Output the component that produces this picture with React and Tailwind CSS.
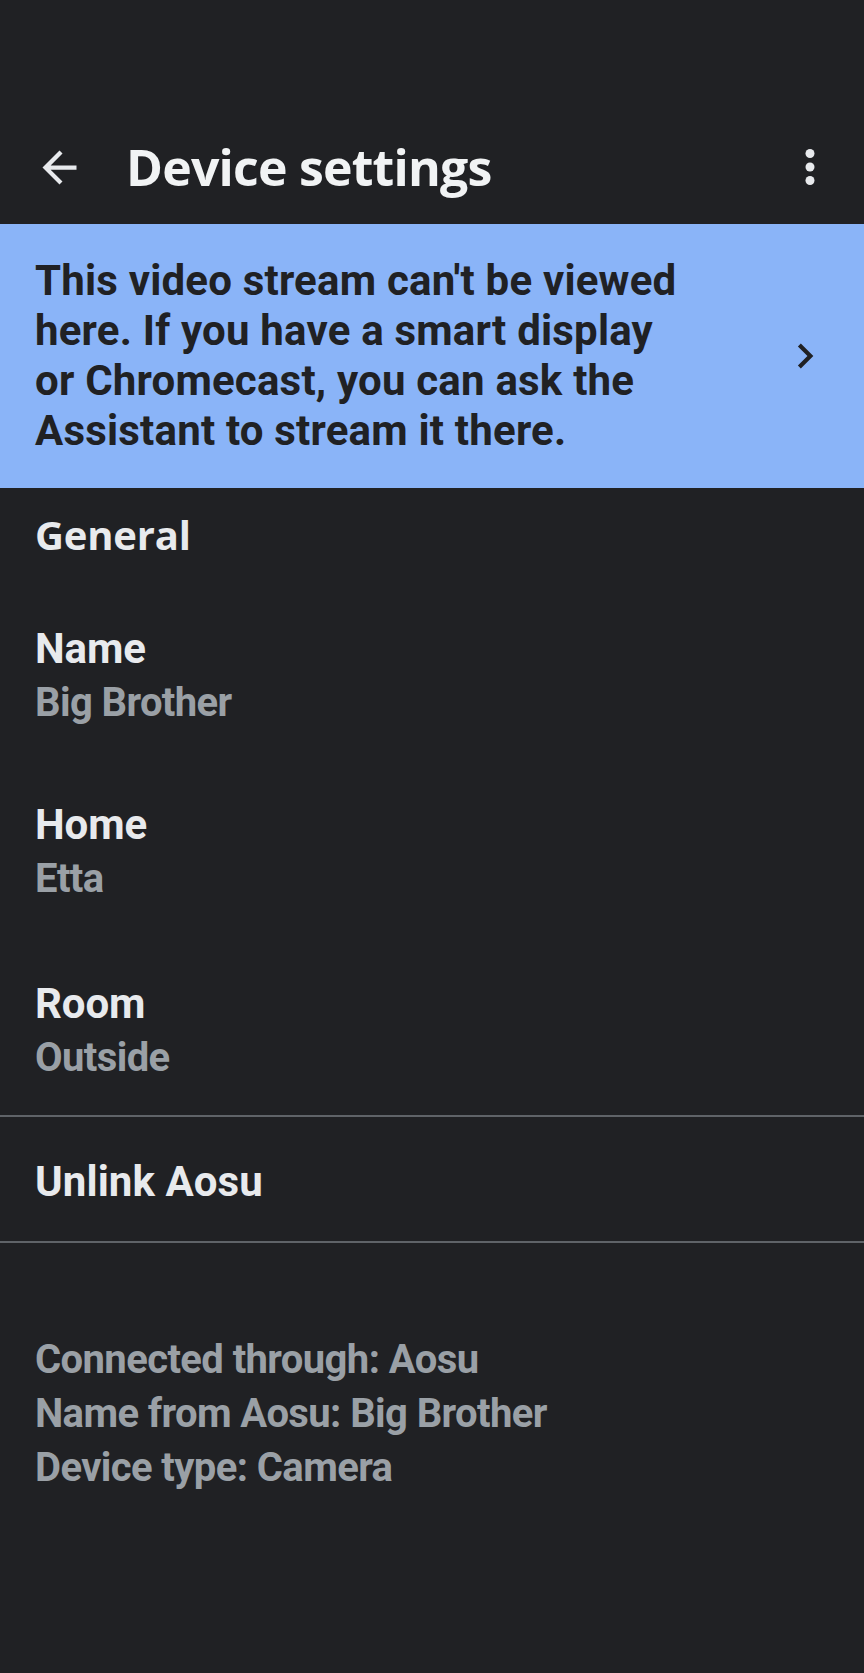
import React from 'react';

function Row({ label, value, className }) {
  return (
    <div className={`px-[35px] ${className}`}>
      <div className="text-[42px] leading-[54px] font-bold tracking-[-0.1px] text-[#e8eaed]">{label}</div>
      <div className="text-[40px] leading-[54px] font-bold tracking-[-0.6px] text-[#9aa0a6]">{value}</div>
    </div>
  );
}

export default function App() {
  return (
    <div className="min-h-[1673px] w-full bg-[#202124] font-['Roboto','Liberation_Sans',sans-serif]">
      {/* status bar space */}
      <div className="h-[110px]" />

      {/* header */}
      <header className="h-[114px] flex items-center">
        <button className="ml-[34px] w-[51px] h-[51px] flex items-center justify-center">
          <svg viewBox="0 0 24 24" className="w-[51px] h-[51px]" fill="#e8eaed">
            <path d="M20 11H7.83l5.59-5.59L12 4l-8 8 8 8 1.41-1.41L7.83 13H20v-2z" />
          </svg>
        </button>
        <h1 className="ml-[41px] flex-1 text-[50px] leading-none font-bold text-[#f1f3f4] font-['Open_Sans',sans-serif] tracking-[-0.8px]">
          Device settings
        </h1>
        <button className="mr-[27px] w-[54px] h-[54px] flex items-center justify-center">
          <svg viewBox="0 0 24 24" className="w-[54px] h-[54px]" fill="#e8eaed">
            <circle cx="12" cy="6" r="2" />
            <circle cx="12" cy="12" r="2" />
            <circle cx="12" cy="18" r="2" />
          </svg>
        </button>
      </header>

      {/* banner */}
      <div className="bg-[#8ab4f8] h-[264px] flex items-center">
        <p className="pl-[35px] flex-1 text-[42px] leading-[50px] font-bold tracking-[0.2px] text-[#202124]">
          This video stream can't be viewed
          <br />
          here. If you have a smart display
          <br />
          or Chromecast, you can ask the
          <br />
          Assistant to stream it there.
        </p>
        <svg viewBox="0 0 24 24" className="w-[50px] h-[50px] mr-[34px]" fill="#202124">
          <path d="M10 6L8.59 7.41 13.17 12l-4.58 4.59L10 18l6-6z" />
        </svg>
      </div>

      {/* general */}
      <h2 className="mt-[20px] px-[35px] text-[40px] leading-[54px] font-bold text-[#e8eaed] font-['Open_Sans',sans-serif] tracking-[-0.2px]">
        General
      </h2>

      <Row label="Name" value="Big Brother" className="mt-[60px]" />
      <Row label="Home" value="Etta" className="mt-[68px]" />
      <Row label="Room" value="Outside" className="mt-[71px]" />

      <div className="mt-[30px] h-[2px] bg-[#5f6368]" />
      <div className="px-[35px] pt-[38px] pb-[32px]">
        <div className="text-[42px] leading-[54px] font-bold tracking-[0.1px] text-[#e8eaed]">Unlink Aosu</div>
      </div>
      <div className="h-[2px] bg-[#5f6368]" />

      {/* footer info */}
      <div className="mt-[90px] px-[35px] text-[40px] leading-[54px] font-bold tracking-[-0.6px] text-[#9aa0a6]">
        <div>Connected through: Aosu</div>
        <div>Name from Aosu: Big Brother</div>
        <div>Device type: Camera</div>
      </div>
    </div>
  );
}
